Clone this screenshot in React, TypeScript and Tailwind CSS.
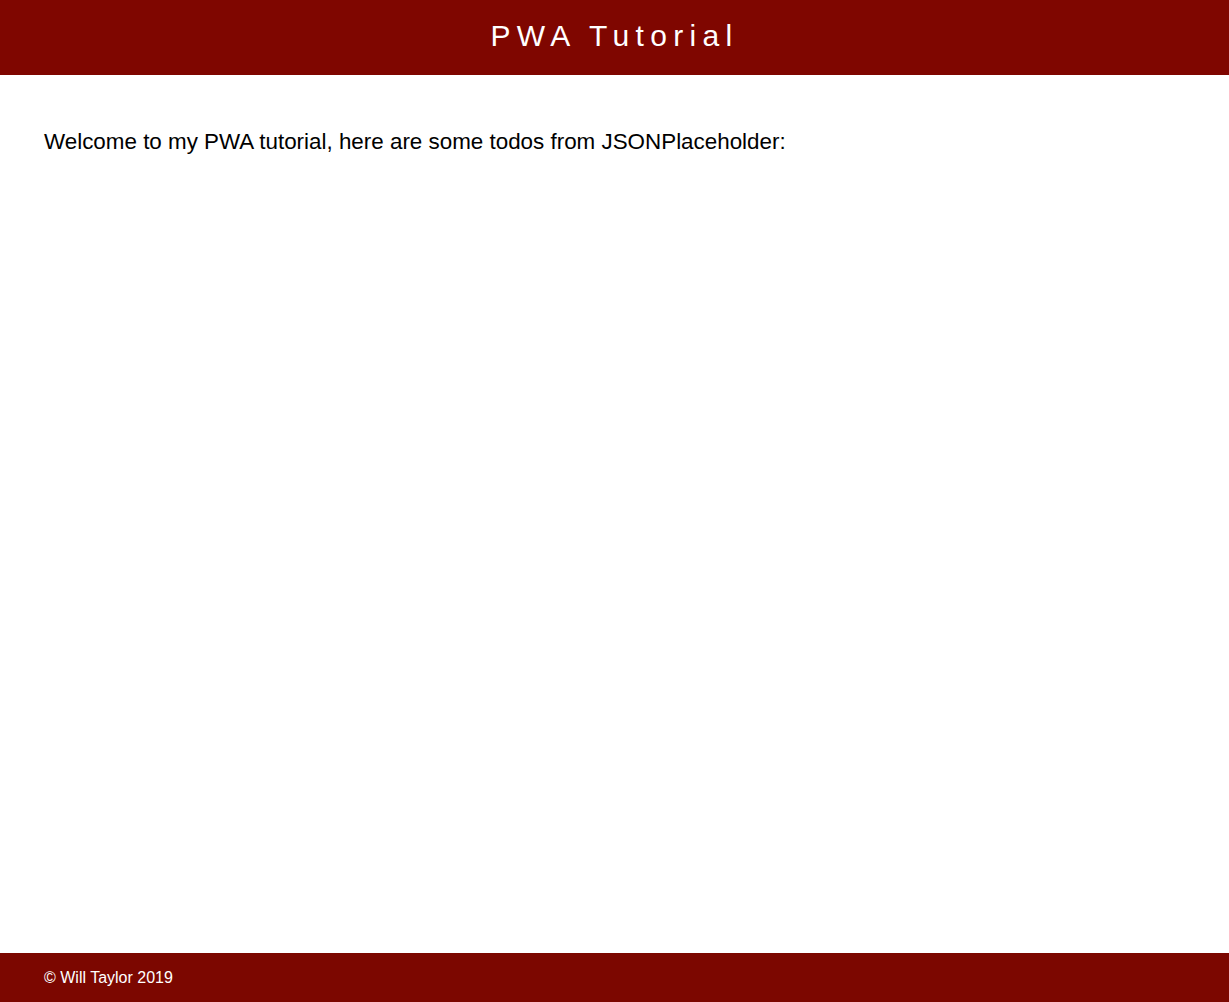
export default function App() {
  return (
    <div className="flex min-h-screen flex-col bg-white" style={{ fontFamily: '"Liberation Sans", Arial, sans-serif' }}>
      <header className="flex h-[75px] items-center justify-center bg-[#7f0600]">
        <h1 className="mb-[4px] text-[30px] font-normal tracking-[6.3px] text-white">PWA Tutorial</h1>
      </header>
      <main className="flex-1 px-[44px] pt-[54px]">
        <p className="text-[22.4px] leading-[26px] text-black">Welcome to my PWA tutorial, here are some todos from JSONPlaceholder:</p>
      </main>
      <footer className="flex h-[49px] items-center bg-[#7c0700] px-[44px]">
        <span className="text-[16px] text-white">© Will Taylor 2019</span>
      </footer>
    </div>
  );
}
